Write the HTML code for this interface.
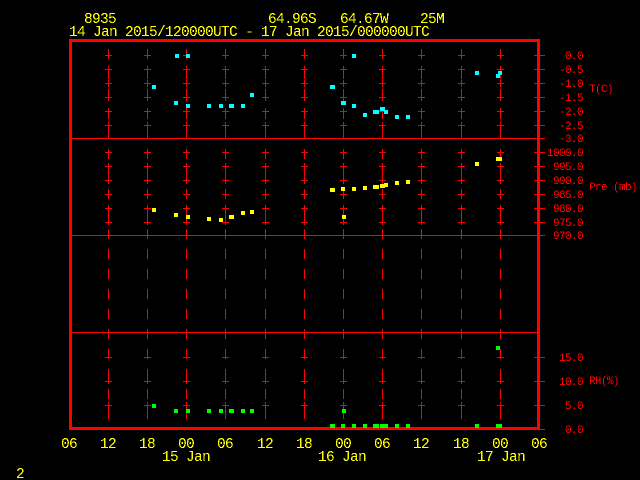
<!DOCTYPE html>
<html>
<head>
<meta charset="utf-8">
<style>
html,body{margin:0;padding:0;background:#000;width:640px;height:480px;overflow:hidden}
svg{display:block}
text{font-family:"Liberation Mono",monospace;white-space:pre}
.y{fill:#ff0;font-size:14.5px;letter-spacing:-.7px}
.r{fill:#f00;font-size:11px;letter-spacing:-.6px}
.e{text-anchor:end}
</style>
</head>
<body>
<svg width="640" height="480" viewBox="0 0 640 480" xmlns="http://www.w3.org/2000/svg">
<defs>
<filter id="c" x="0" y="0" width="640" height="480" filterUnits="userSpaceOnUse" color-interpolation-filters="sRGB">
<feComponentTransfer><feFuncA type="discrete" tableValues="0 1"/></feComponentTransfer>
</filter>
<path id="col" fill="none" stroke="#f00" stroke-width="1" d="M.5 49V59M.5 66V79M.5 80V87M.5 89V101M.5 108V119M.5 122V139M.5 149V159M.5 163V184M.5 189V199M.5 205V225M.5 229V239M.5 249V259M.5 269V279M.5 289V299M.5 309V319M.5 329V339M.5 349V359M.5 369V384M.5 389V399M.5 402V419M-3 55.5H4M-3 69.5H4M-3 83.5H4M-3 97.5H4M-3 111.5H4M-3 125.5H4M-3 152.5H4M-3 166.5H4M-3 180.5H4M-3 194.5H4M-3 208.5H4M-3 222.5H4M-3 357.5H4M-3 381.5H4M-3 405.5H4"/>
</defs>
<rect width="640" height="480" fill="#000"/>
<g shape-rendering="crispEdges">
<use href="#col" x="108"/><use href="#col" x="147"/><use href="#col" x="186"/><use href="#col" x="225"/><use href="#col" x="265"/><use href="#col" x="304"/><use href="#col" x="343"/><use href="#col" x="382"/><use href="#col" x="421"/><use href="#col" x="461"/><use href="#col" x="500"/>
<path fill="none" stroke="#f00" stroke-width="1" d="M72 138.500H545M72 235.500H545M72 332.500H537M534 55.500H545M534 69.500H545M534 83.500H545M534 97.500H545M534 111.500H545M534 125.500H545M534 152.500H545M534 166.500H545M534 180.500H545M534 194.500H545M534 208.500H545M534 222.500H545M534 357.500H545M534 381.500H545M534 405.500H545M537 429.500H545"/>
<path fill="#f00" d="M69 39H540V42H69ZM69 427H540V430H69ZM69 39H72V430H69ZM537 39H540V430H537Z"/>
<g fill="#0ff">
<rect x="175" y="54" width="4" height="4"/><rect x="186" y="54" width="4" height="4"/><rect x="152" y="85" width="4" height="4"/><rect x="174" y="101" width="4" height="4"/><rect x="186" y="104" width="4" height="4"/><rect x="207" y="104" width="4" height="4"/><rect x="219" y="104" width="4" height="4"/><rect x="229" y="104" width="5" height="4"/><rect x="241" y="104" width="4" height="4"/><rect x="250" y="93" width="4" height="4"/>
<rect x="352" y="54" width="4" height="4"/><rect x="330" y="85" width="5" height="4"/><rect x="341" y="101" width="5" height="4"/><rect x="352" y="104" width="4" height="4"/><rect x="363" y="113" width="4" height="4"/><rect x="373" y="110" width="6" height="4"/><rect x="380" y="107" width="5" height="4"/><rect x="384" y="110" width="4" height="4"/><rect x="395" y="115" width="4" height="4"/><rect x="406" y="115" width="4" height="4"/><rect x="475" y="71" width="4" height="4"/><rect x="498" y="71" width="4" height="4"/><rect x="496" y="74" width="4" height="4"/>
</g>
<g fill="#ff0">
<rect x="152" y="208" width="4" height="4"/><rect x="174" y="213" width="4" height="4"/><rect x="186" y="215" width="4" height="4"/><rect x="207" y="217" width="4" height="4"/><rect x="219" y="218" width="4" height="4"/><rect x="229" y="215" width="5" height="4"/><rect x="241" y="211" width="4" height="4"/><rect x="250" y="210" width="4" height="4"/>
<rect x="330" y="188" width="5" height="4"/><rect x="341" y="187" width="4" height="4"/><rect x="352" y="187" width="4" height="4"/><rect x="363" y="186" width="4" height="4"/><rect x="373" y="185" width="6" height="4"/><rect x="380" y="184" width="5" height="4"/><rect x="384" y="183" width="4" height="4"/><rect x="395" y="181" width="4" height="4"/><rect x="406" y="180" width="4" height="4"/><rect x="475" y="162" width="4" height="4"/><rect x="496" y="157" width="6" height="4"/><rect x="342" y="215" width="4" height="4"/>
</g>
<g fill="#0f0">
<rect x="152" y="404" width="4" height="4"/><rect x="174" y="409" width="4" height="4"/><rect x="186" y="409" width="4" height="4"/><rect x="207" y="409" width="4" height="4"/><rect x="219" y="409" width="4" height="4"/><rect x="229" y="409" width="5" height="4"/><rect x="241" y="409" width="4" height="4"/><rect x="250" y="409" width="4" height="4"/>
<rect x="330" y="424" width="5" height="4"/><rect x="341" y="424" width="4" height="4"/><rect x="352" y="424" width="4" height="4"/><rect x="363" y="424" width="4" height="4"/><rect x="373" y="424" width="6" height="4"/><rect x="380" y="424" width="8" height="4"/><rect x="395" y="424" width="4" height="4"/><rect x="406" y="424" width="4" height="4"/><rect x="475" y="424" width="4" height="4"/><rect x="496" y="424" width="6" height="4"/><rect x="342" y="409" width="4" height="4"/><rect x="496" y="346" width="4" height="4"/>
</g>
</g>
<g filter="url(#c)">
<text class="y" x="84" y="23">8935</text>
<text class="y" x="268" y="23">64.96S</text>
<text class="y" x="340" y="23">64.67W</text>
<text class="y" x="420" y="23">25M</text>
<text class="y" x="69" y="36">14 Jan 2015/120000UTC - 17 Jan 2015/000000UTC</text>
<text class="y" x="61" y="448">06</text>
<text class="y" x="100" y="448">12</text>
<text class="y" x="139" y="448">18</text>
<text class="y" x="178" y="448">00</text>
<text class="y" x="217" y="448">06</text>
<text class="y" x="257" y="448">12</text>
<text class="y" x="296" y="448">18</text>
<text class="y" x="335" y="448">00</text>
<text class="y" x="374" y="448">06</text>
<text class="y" x="413" y="448">12</text>
<text class="y" x="453" y="448">18</text>
<text class="y" x="492" y="448">00</text>
<text class="y" x="531" y="448">06</text>
<text class="y" x="162" y="461">15 Jan</text>
<text class="y" x="318" y="461">16 Jan</text>
<text class="y" x="477" y="461">17 Jan</text>
<text class="y" x="16" y="478">2</text>
<text class="r e" x="583" y="59">0.0</text>
<text class="r e" x="583" y="73">-0.5</text>
<text class="r e" x="583" y="87">-1.0</text>
<text class="r e" x="583" y="101">-1.5</text>
<text class="r e" x="583" y="115">-2.0</text>
<text class="r e" x="583" y="129">-2.5</text>
<text class="r e" x="583" y="142">-3.0</text>
<text class="r e" x="583" y="156">1000.0</text>
<text class="r e" x="583" y="170">995.0</text>
<text class="r e" x="583" y="184">990.0</text>
<text class="r e" x="583" y="198">985.0</text>
<text class="r e" x="583" y="212">980.0</text>
<text class="r e" x="583" y="226">975.0</text>
<text class="r e" x="583" y="239">970.0</text>
<text class="r e" x="583" y="361">15.0</text>
<text class="r e" x="583" y="385">10.0</text>
<text class="r e" x="583" y="409">5.0</text>
<text class="r e" x="583" y="433">0.0</text>
<text class="r" x="589" y="92">T(C)</text>
<text class="r" x="589" y="190">Pre (mb)</text>
<text class="r" x="589" y="384">RH(%)</text>
</g>
</svg>
</body>
</html>
